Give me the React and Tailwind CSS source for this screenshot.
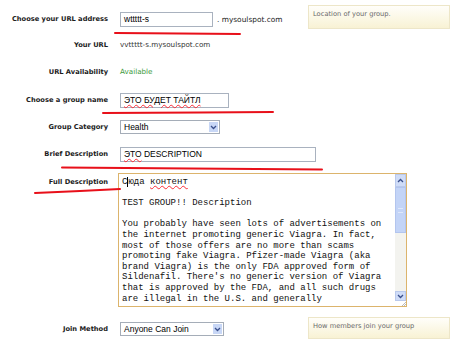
import React from 'react';

const Label = ({ children, className = '' }) => (
  <div
    className={`w-[108px] shrink-0 text-right font-['DejaVu_Sans',sans-serif] text-[6.7px] font-bold text-[#1c1c1c] ${className}`}
  >
    {children}
  </div>
);

const Field = ({ width, children }) => (
  <div
    className={`ml-3 flex h-[15px] items-center border border-[#a9b2bf] bg-white px-[3px] font-['Liberation_Sans',Arial,sans-serif] text-[8.5px] text-black ${width}`}
  >
    {children}
  </div>
);

const Chevron = ({ up }) => (
  <svg width="7" height="5" viewBox="0 0 7 5">
    <path
      d={up ? 'M1 4 L3.5 1.5 L6 4' : 'M1 1 L3.5 3.5 L6 1'}
      fill="none"
      stroke="#3a4f8c"
      strokeWidth="1.3"
    />
  </svg>
);

const Select = ({ width, value }) => (
  <div
    className={`ml-3 flex h-[14px] items-center justify-between border border-[#a5adb8] bg-white pl-[3px] font-['Liberation_Sans',Arial,sans-serif] text-[8.5px] text-black ${width}`}
  >
    <span>{value}</span>
    <div className="mr-[1px] flex h-[10px] w-[9px] items-center justify-center bg-[#c8d7f6]">
      <Chevron />
    </div>
  </div>
);

const Tip = ({ children, className = '' }) => (
  <div
    className={`ml-auto mr-[3px] w-[142px] border border-[#ede6c8] bg-linear-to-b from-[#fffefa] to-[#f8f2d4] px-[4px] pt-[5px] font-['DejaVu_Sans',sans-serif] text-[6.7px] leading-none text-[#6a6a6a] ${className}`}
  >
    {children}
  </div>
);

const lines = [
  '',
  'TEST GROUP!! Description',
  '',
  'You probably have seen lots of advertisements on',
  'the internet promoting generic Viagra. In fact,',
  'most of those offers are no more than scams',
  'promoting fake Viagra. Pfizer-made Viagra (aka',
  'brand Viagra) is the only FDA approved form of',
  "Sildenafil. There's no generic version of Viagra",
  'that is approved by the FDA, and all such drugs',
  'are illegal in the U.S. and generally',
];

export default function App() {
  return (
    <div className="relative h-[341px] w-[453px] overflow-hidden bg-white">
      {/* row 1 */}
      <div className="flex h-[32px] items-start pt-[5px]">
        <Label className="mt-[7px] leading-[15px]">Choose your URL address</Label>
        <div className="mt-[7px] flex">
          <Field width="w-[93px]">wttttt-s</Field>
          <span className="ml-[4px] font-['DejaVu_Sans',sans-serif] text-[7.4px] leading-[15px] text-[#222]">
            . mysoulspot.com
          </span>
        </div>
        <Tip className="h-[24px]">Location of your group.</Tip>
      </div>

      <div className="flex h-[26px] items-center">
        <Label>Your URL</Label>
        <span className="ml-3 font-['DejaVu_Sans',sans-serif] text-[7.2px] text-[#333]">
          vvttttt-s.mysoulspot.com
        </span>
      </div>

      <div className="flex h-[28px] items-center">
        <Label>URL Availability</Label>
        <span className="ml-3 font-['DejaVu_Sans',sans-serif] text-[7.2px] text-[#3c9a3c]">Available</span>
      </div>

      <div className="flex h-[28px] items-center">
        <Label>Choose a group name</Label>
        <Field width="w-[109px]">
          <span className="underline decoration-red-500 decoration-wavy decoration-1">ЭТО БУДЕТ ТАЙТЛ</span>
        </Field>
      </div>

      <div className="flex h-[26px] items-center">
        <Label>Group Category</Label>
        <Select width="w-[100px]" value="Health" />
      </div>

      <div className="flex h-[28px] items-center">
        <Label>Brief Description</Label>
        <Field width="w-[196px]">
          <span className="underline decoration-red-500 decoration-wavy decoration-1">ЭТО</span>
          <span>&nbsp;DESCRIPTION</span>
        </Field>
      </div>

      {/* full description */}
      <div className="mt-[5px] flex items-start">
        <Label className="mt-[4px] leading-[10px]">Full Description</Label>
        <div className="ml-[10px] flex h-[134px] w-[289px] border border-[#dcb46c] bg-white">
          <div className="flex-1 overflow-hidden pl-[3px] pt-[3px] font-['Liberation_Mono','Courier_New',monospace] text-[9px] leading-[10.6px] text-[#111]">
            <div className="whitespace-pre">
              С<span className="border-l border-black" />юда{' '}
              <span className="underline decoration-red-500 decoration-wavy decoration-1">контент</span>
            </div>
            {lines.map((l, i) => (
              <div key={i} className="h-[10.6px] whitespace-pre">
                {l}
              </div>
            ))}
          </div>
          <div className="flex w-[11px] flex-col bg-[#f3f3ef]">
            <div className="flex h-[13px] items-center justify-center border border-[#b9c9ec] bg-[#cfdcf8]">
              <Chevron up />
            </div>
            <div className="flex h-[46px] items-center justify-center border border-[#b3c5ee] bg-[#c3d4f7]">
              <div className="h-[5px] w-[5px] border-y border-[#dfe8fb]" />
            </div>
            <div className="flex-1" />
            <div className="flex h-[10px] items-center justify-center border border-[#b9c9ec] bg-[#cfdcf8]">
              <Chevron />
            </div>
            <div className="relative h-[5px] bg-white">
              <svg className="absolute right-0 bottom-0" width="5" height="5" viewBox="0 0 5 5">
                <path d="M1 5 L5 1 M3 5 L5 3" stroke="#aaa" strokeWidth="0.8" />
              </svg>
            </div>
          </div>
        </div>
      </div>

      {/* join */}
      <div className="flex h-[34px] items-start">
        <Label className="mt-[15px] leading-[14px]">Join Method</Label>
        <div className="mt-[15px]">
          <Select width="w-[104px]" value="Anyone Can Join" />
        </div>
        <Tip className="mt-[10px] h-[22px]">How members join your group</Tip>
      </div>

      {/* red annotation strokes */}
      <svg className="pointer-events-none absolute inset-0" width="453" height="341" viewBox="0 0 453 341">
        <g fill="none" stroke="#e8101a" strokeWidth="2" strokeLinecap="round">
          <path d="M115 33 L180 33.5 L240 34" />
          <path d="M103 113 L200 112.5 L273 112" />
          <path d="M62 167.5 L190 168.5 L322 169.5" />
          <path d="M35 193 L80 191 L120 189" />
        </g>
      </svg>
    </div>
  );
}
